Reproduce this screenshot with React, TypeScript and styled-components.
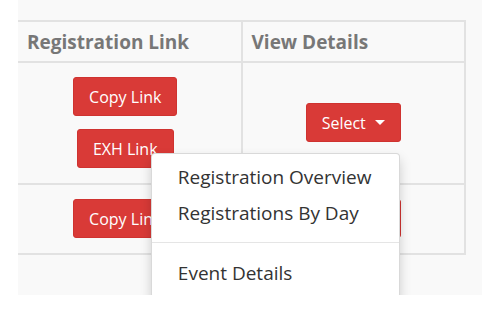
import styled, { createGlobalStyle } from "styled-components";

const GlobalStyle = createGlobalStyle`
    body {
        margin: 0;
        background: #ffffff;
        font-family: "Open Sans", "Liberation Sans", sans-serif;
    }
`;

const menuItems = ["Registration Overview", "Registrations By Day"];

export default function App() {
    return (
        <>
            <GlobalStyle />
            <Panel>
                <Table>
                    <thead>
                        <tr>
                            <HeadCell>Registration Link</HeadCell>
                            <HeadCell>View Details</HeadCell>
                        </tr>
                    </thead>
                    <tbody>
                        <tr>
                            <Cell>
                                <ButtonStack>
                                    <RedButton>Copy Link</RedButton>
                                    <RedButton>EXH Link</RedButton>
                                </ButtonStack>
                            </Cell>
                            <Cell>
                                <DropdownWrap>
                                    <RedButton>
                                        Select <Caret />
                                    </RedButton>
                                    <Menu>
                                        {menuItems.map((item) => (
                                            <MenuItem key={item}>{item}</MenuItem>
                                        ))}
                                        <Divider />
                                        <MenuItem>Event Details</MenuItem>
                                    </Menu>
                                </DropdownWrap>
                            </Cell>
                        </tr>
                        <tr>
                            <Cell>
                                <RedButton>Copy Link</RedButton>
                            </Cell>
                            <Cell>
                                <DropdownWrap>
                                    <RedButton>
                                        Select <Caret />
                                    </RedButton>
                                </DropdownWrap>
                            </Cell>
                        </tr>
                    </tbody>
                </Table>
            </Panel>
        </>
    );
}

const Panel = styled.div`
    margin-left: 18px;
    height: 295px;
    padding-top: 20px;
    box-sizing: border-box;
    background: #f9f9f9;
    overflow: hidden;
`;

const Table = styled.table`
    width: 448px;
    border-collapse: collapse;
    table-layout: fixed;
    border-top: 2px solid #e2e2e2;
`;

const HeadCell = styled.th`
    height: 41px;
    padding: 0 9px;
    box-sizing: border-box;
    text-align: left;
    font-size: 19px;
    font-weight: 700;
    color: #777777;
    border-bottom: 2px solid #e2e2e2;
    &:last-child {
        border-left: 2px solid #e2e2e2;
        border-right: 2px solid #e2e2e2;
    }
`;

const Cell = styled.td`
    padding: 14px 8px 15px 0;
    text-align: center;
    vertical-align: middle;
    border-bottom: 2px solid #e2e2e2;
    &:last-child {
        padding: 14px 0 15px;
        border-left: 2px solid #e2e2e2;
        border-right: 2px solid #e2e2e2;
    }
`;

const ButtonStack = styled.div`
    display: flex;
    flex-direction: column;
    align-items: center;
    gap: 13px;
`;

const RedButton = styled.button`
    display: inline-flex;
    align-items: center;
    justify-content: center;
    height: 39px;
    padding: 0 15px;
    border: 1px solid #cf3330;
    border-radius: 3px;
    background: #d93a37;
    color: #ffffff;
    font-family: "Open Sans", "Liberation Sans", sans-serif;
    font-size: 16px;
    white-space: nowrap;
`;

const Caret = styled.span`
    display: inline-block;
    margin-left: 9px;
    border-top: 5px solid #ffffff;
    border-left: 5px solid transparent;
    border-right: 5px solid transparent;
`;

const DropdownWrap = styled.div`
    position: relative;
    display: inline-block;
`;

const Menu = styled.ul`
    position: absolute;
    top: calc(100% + 11px);
    right: 1px;
    width: 249px;
    margin: 0;
    padding: 5px 0 6px;
    box-sizing: border-box;
    list-style: none;
    text-align: left;
    background: #ffffff;
    border: 1px solid rgba(0, 0, 0, 0.15);
    border-radius: 4px;
    box-shadow: 0 6px 12px rgba(0, 0, 0, 0.175);
    z-index: 5;
`;

const MenuItem = styled.li`
    height: 36px;
    line-height: 36px;
    padding-left: 26px;
    font-size: 19px;
    color: #333333;
    white-space: nowrap;
`;

const Divider = styled.li`
    height: 1px;
    margin: 11px 0 12px;
    background: #e5e5e5;
`;
